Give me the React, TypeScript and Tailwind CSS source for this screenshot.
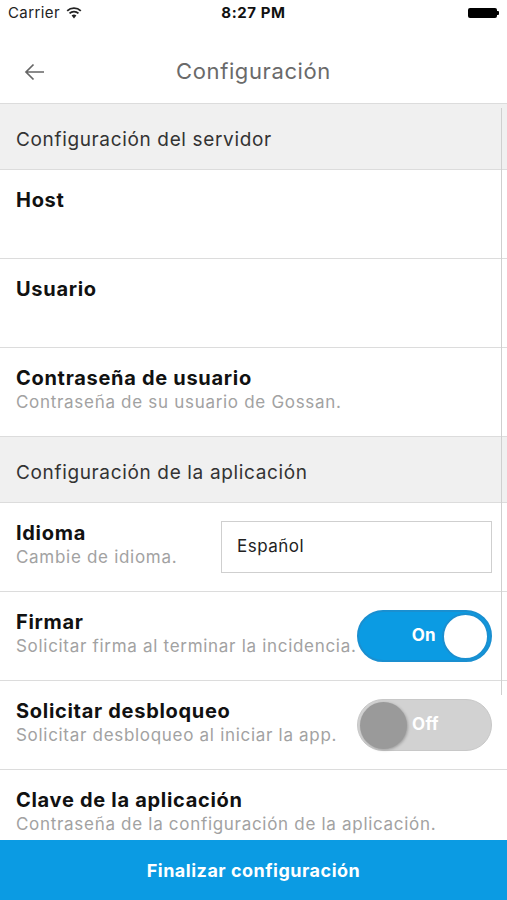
import React from "react";

const font = { fontFamily: "Inter, 'Liberation Sans', Arial, sans-serif" };

function Row({
  title,
  subtitle,
  right,
  border = true,
}: {
  title: string;
  subtitle?: string;
  right?: React.ReactNode;
  border?: boolean;
}) {
  return (
    <div
      className={`h-[89px] shrink-0 flex items-center justify-between pl-4 pr-[15px] ${
        border ? "border-b border-[#dcdcdc]" : ""
      }`}
    >
      <div className="self-start pt-[17px]">
        <div className="text-[20px] leading-[26px] font-bold text-[#111] tracking-[0.7px]">{title}</div>
        {subtitle && (
          <div className="text-[17px] leading-[22px] text-[#a2a2a2] tracking-[0.7px]">{subtitle}</div>
        )}
      </div>
      {right}
    </div>
  );
}

function Header({ text }: { text: string }) {
  return (
    <div className="h-[66px] shrink-0 bg-[#f0f0f0] border-b border-[#dcdcdc] pl-4 pt-[24px]">
      <div className="text-[19px] leading-[24px] text-[#333] tracking-[0.65px]">{text}</div>
    </div>
  );
}

function ToggleOn() {
  return (
    <div className="w-[135px] h-[52px] rounded-full bg-[#0b9be3] border-2 border-[#1a8fd0] flex items-center justify-end pr-[1px] gap-[6px]">
      <span className="text-white font-bold text-[17px] tracking-[0.3px]">On</span>
      <div className="w-[47px] h-[47px] rounded-full bg-white border-2 border-[#1a8fd0]" />
    </div>
  );
}

function ToggleOff() {
  return (
    <div className="w-[135px] h-[52px] rounded-full bg-[#d2d2d2] border border-[#c8c8c8] flex items-center pl-[2px] gap-[5px]">
      <div className="w-[47px] h-[47px] rounded-full bg-[#9a9a9a] shadow-[1px_1px_3px_rgba(0,0,0,0.25)]" />
      <span className="text-white font-bold text-[17px] tracking-[0.3px]">Off</span>
    </div>
  );
}

export default function App() {
  return (
    <div className="w-[507px] h-[900px] relative overflow-hidden bg-white flex flex-col" style={font}>
      {/* Status bar */}
      <div className="h-[26px] shrink-0 flex items-center justify-between px-[8px] relative">
        <div className="flex items-center gap-[6px] text-[15px] text-[#222] tracking-[0.4px]">
          <span>Carrier</span>
          <svg width="16" height="12" viewBox="0 0 16 12">
            <path d="M8 11.5 L5.6 8.6 A3.6 3.6 0 0 1 10.4 8.6 Z" fill="#222" />
            <path d="M3.5 6.4 A6.5 6.5 0 0 1 12.5 6.4" stroke="#222" strokeWidth="1.8" fill="none" />
            <path d="M1.2 3.9 A9.8 9.8 0 0 1 14.8 3.9" stroke="#222" strokeWidth="1.8" fill="none" />
          </svg>
        </div>
        <div className="absolute left-0 right-0 text-center text-[15px] font-bold text-[#111] tracking-[0.6px] pointer-events-none">
          8:27 PM
        </div>
        <div className="flex items-center">
          <div className="w-[29px] h-[10px] rounded-[2px] bg-black" />
          <div className="w-[2px] h-[4px] bg-black rounded-r-[1px]" />
        </div>
      </div>

      {/* Nav bar */}
      <div className="h-[78px] shrink-0 border-b border-[#dcdcdc] flex items-center relative">
        <div className="pl-[24px] pt-[14px]">
          <svg width="21" height="18" viewBox="0 0 21 18">
            <path d="M20 9 H2 M9.5 1.5 L2 9 L9.5 16.5" stroke="#666" strokeWidth="1.7" fill="none" />
          </svg>
        </div>
        <div className="absolute left-0 right-0 top-[29px] text-center text-[22px] text-[#6a6a6a] tracking-[0.6px]">
          Configuración
        </div>
      </div>

      {/* Content */}
      <div className="flex-1 overflow-hidden flex flex-col">
        <Header text="Configuración del servidor" />
        <Row title="Host" />
        <Row title="Usuario" />
        <Row title="Contraseña de usuario" subtitle="Contraseña de su usuario de Gossan." />
        <Header text="Configuración de la aplicación" />
        <Row
          title="Idioma"
          subtitle="Cambie de idioma."
          right={
            <div className="w-[271px] h-[52px] border border-[#cfcfcf] flex items-center pl-[15px] text-[17px] text-[#222] tracking-[0.5px]">
              Español
            </div>
          }
        />
        <Row title="Firmar" subtitle="Solicitar firma al terminar la incidencia." right={<ToggleOn />} />
        <Row title="Solicitar desbloqueo" subtitle="Solicitar desbloqueo al iniciar la app." right={<ToggleOff />} />
        <Row title="Clave de la aplicación" subtitle="Contraseña de la configuración de la aplicación." border={false} />
      </div>

      {/* Button */}
      <div className="h-[60px] shrink-0 bg-[#0b9be3] flex items-center justify-center">
        <span className="text-white font-bold text-[18px] tracking-[0.5px]">Finalizar configuración</span>
      </div>

      {/* Scroll indicator */}
      <div className="absolute left-[501px] top-[108px] w-[1px] h-[587px] bg-[#cfcfcf]" />
    </div>
  );
}
